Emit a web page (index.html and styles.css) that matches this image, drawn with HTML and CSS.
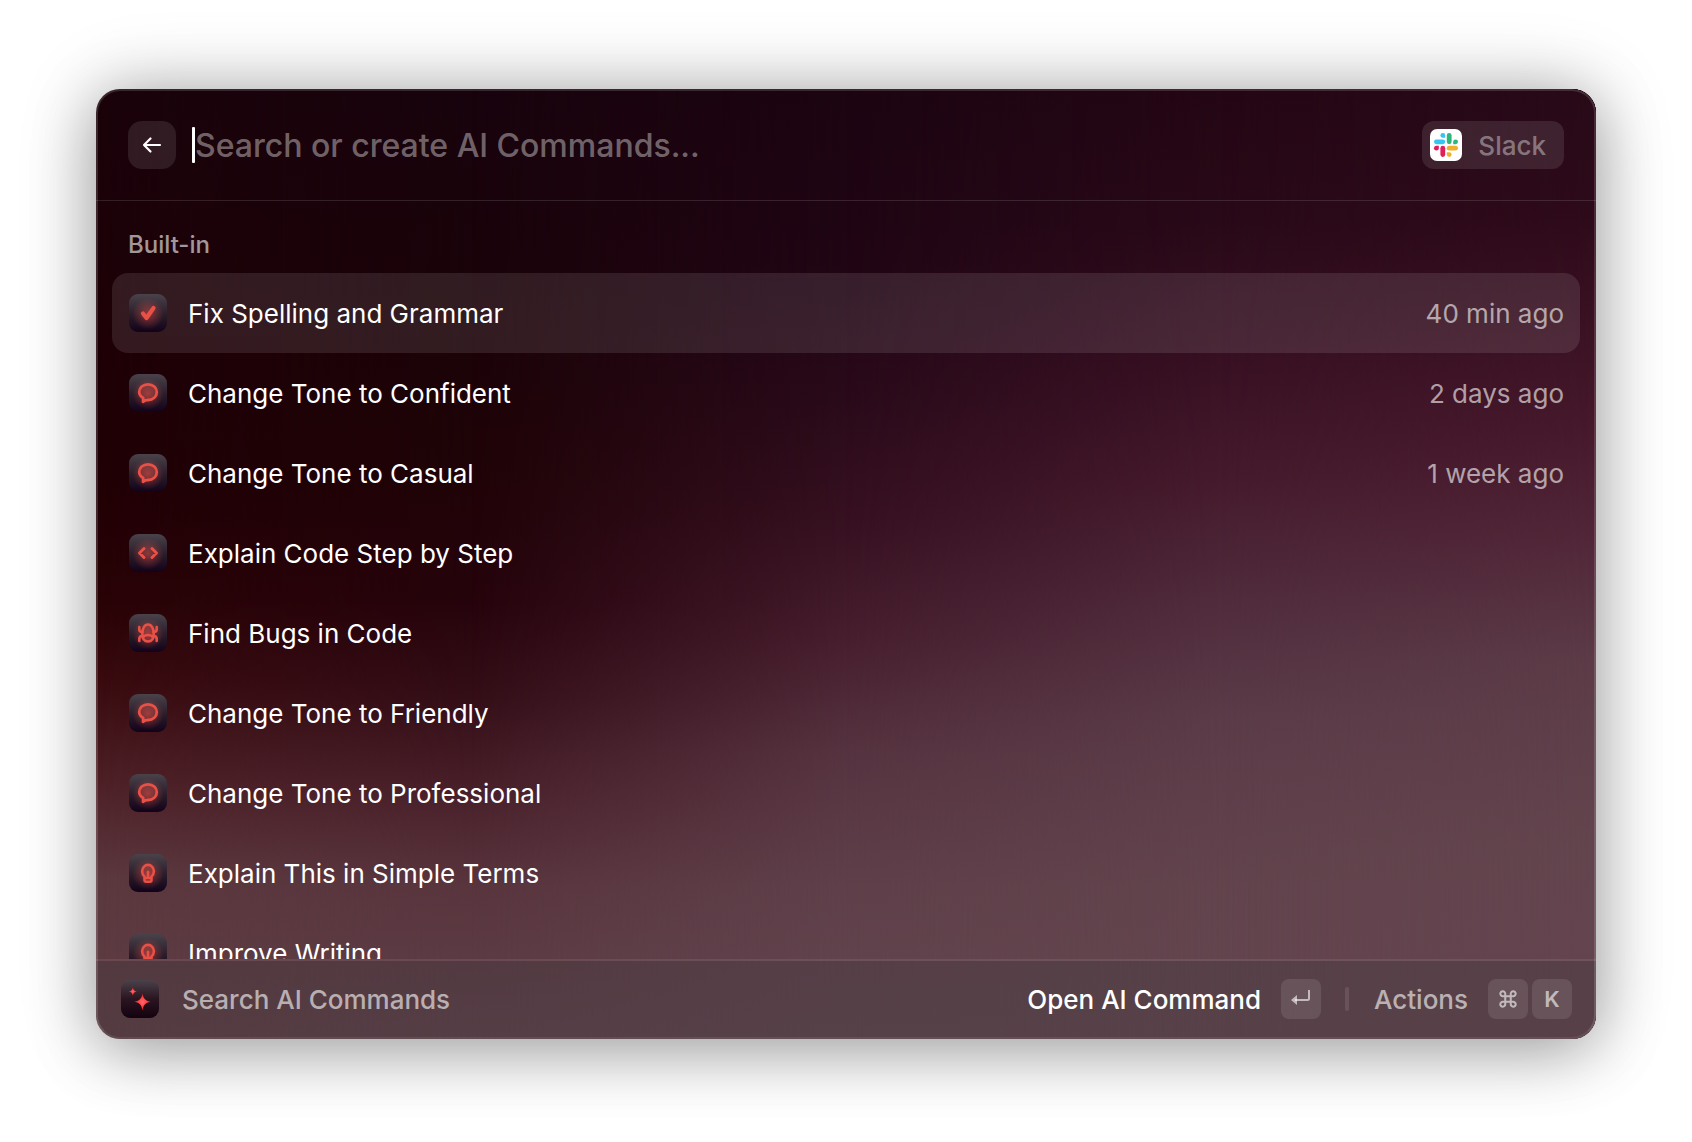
FILE: index.html
```html
<!DOCTYPE html>
<html lang="en">
<head>
<meta charset="utf-8">
<title>AI Commands</title>
<link rel="stylesheet" href="styles.css">
</head>
<body>
<svg class="sprite" aria-hidden="true">
  <defs>
    <symbol id="check" viewBox="0 0 38 38"><path d="M14 19.500l3.500 4.500 7-10" fill="none" stroke="currentColor" stroke-width="4.200" stroke-linecap="round" stroke-linejoin="round"/></symbol>
    <symbol id="bubble" viewBox="0 0 38 38"><path d="M19 10.300c5 0 8.800 3.200 8.800 7.800s-3.800 7.900-8.800 7.900c-.8 0-1.500 0-2.200.3l-2.800 1.500.2-3.800c-2.400-1.300-4-3.300-4-5.900 0-4.600 3.800-7.800 8.800-7.800z" fill="currentColor" fill-opacity=".2" stroke="currentColor" stroke-width="2.800" stroke-linejoin="round"/></symbol>
    <symbol id="code" viewBox="0 0 38 38"><path d="M15 14.500L10.500 19l4.500 4.500M23 14.500L27.500 19 23 23.500" fill="none" stroke="currentColor" stroke-width="3" stroke-linecap="round" stroke-linejoin="round"/></symbol>
    <symbol id="bug" viewBox="0 0 38 38"><g fill="none" stroke="currentColor" stroke-width="2.600" stroke-linecap="round" stroke-linejoin="round"><path d="M19 10.500c-3.500 0-5.700 4-5.700 9 0 5 2.200 8 5.700 8s5.700-3 5.700-8c0-5-2.200-9-5.700-9z" fill="currentColor" fill-opacity=".2"/><path d="M14.500 22.500c2.500-2 6.500-2 9 0M10.300 13v2.500c0 1.500 1 2.500 3 2.500M27.700 13v2.500c0 1.500-1 2.500-3 2.500M10.300 27v-2c0-1.700 1-3 3-3M27.700 27v-2c0-1.700-1-3-3-3"/></g></symbol>
    <symbol id="bulb" viewBox="0 0 38 38"><g fill="none" stroke="currentColor" stroke-width="2.600" stroke-linecap="round" stroke-linejoin="round"><path d="M15.500 22.500c-1.500-1.300-2.400-3-2.400-5.200a5.900 6.400 0 0 1 11.800 0c0 2.200-.9 3.900-2.400 5.200v3.600a1.600 1.600 0 0 1-1.600 1.600h-3.800a1.600 1.600 0 0 1-1.600-1.600z" fill="currentColor" fill-opacity=".2"/><path d="M19 18v5.500M16.500 24h5"/></g></symbol>
  </defs>
</svg>
<main class="window">
  <div class="backdrop" aria-hidden="true"><i class="b1"></i><i class="b2"></i><i class="b3"></i><i class="b4"></i><i class="b5"></i></div>
  <header class="search">
    <button class="back" type="button" aria-label="Back"><svg viewBox="0 0 24 24" width="24" height="24"><path d="M20 12H4M10.500 5.500L4 12l6.500 6.500" fill="none" stroke="#fff" stroke-width="2.200" stroke-linecap="round" stroke-linejoin="round"/></svg></button>
    <span class="caret" aria-hidden="true"></span>
    <input class="field" type="text" aria-label="Search or create AI Commands" placeholder="Search or create AI Commands...">
    <button class="app" type="button">
      <svg class="slack" viewBox="0 0 32 32" aria-hidden="true">
        <g fill="#36c5f0"><rect x="4" y="10.400" width="11.200" height="4.800" rx="2.400"/><path d="M15.200 8.800V6.400a2.400 2.400 0 1 0-2.400 2.400z"/></g>
        <g fill="#2eb67d"><rect x="16.800" y="4" width="4.800" height="11.200" rx="2.400"/><path d="M23.200 15.200h2.400a2.400 2.400 0 1 0-2.400-2.400z"/></g>
        <g fill="#ecb22e"><rect x="16.800" y="16.800" width="11.200" height="4.800" rx="2.400"/><path d="M16.800 23.200v2.400a2.400 2.400 0 1 0 2.400-2.400z"/></g>
        <g fill="#e01e5a"><rect x="10.400" y="16.800" width="4.800" height="11.200" rx="2.400"/><path d="M8.800 16.800H6.400a2.400 2.400 0 1 0 2.400 2.400z"/></g>
      </svg>
      <span>Slack</span>
    </button>
  </header>
  <section class="results">
    <h2 class="group">Built-in</h2>
    <ul class="list">
      <li class="row selected"><svg class="tile"><use href="#check"/></svg><span class="name">Fix Spelling and Grammar</span><time>40 min ago</time></li>
      <li class="row"><svg class="tile"><use href="#bubble"/></svg><span class="name">Change Tone to Confident</span><time>2 days ago</time></li>
      <li class="row"><svg class="tile"><use href="#bubble"/></svg><span class="name">Change Tone to Casual</span><time>1 week ago</time></li>
      <li class="row"><svg class="tile"><use href="#code"/></svg><span class="name">Explain Code Step by Step</span></li>
      <li class="row"><svg class="tile"><use href="#bug"/></svg><span class="name">Find Bugs in Code</span></li>
      <li class="row"><svg class="tile"><use href="#bubble"/></svg><span class="name">Change Tone to Friendly</span></li>
      <li class="row"><svg class="tile"><use href="#bubble"/></svg><span class="name">Change Tone to Professional</span></li>
      <li class="row"><svg class="tile"><use href="#bulb"/></svg><span class="name">Explain This in Simple Terms</span></li>
      <li class="row"><svg class="tile"><use href="#bulb"/></svg><span class="name">Improve Writing</span></li>
    </ul>
  </section>
  <footer class="bar">
    <svg class="tile stars" viewBox="0 0 38 38" aria-hidden="true">
      <defs><radialGradient id="glow"><stop offset="0" stop-color="#ff6a66"/><stop offset="1" stop-color="#fb1d22"/></radialGradient></defs>
      <g fill="url(#glow)"><path d="M21.500 13.500c.8 5 2.800 7.200 8 8.200-5.200 1-7.200 3.200-8 8.800-.8-5.600-2.800-7.800-8-8.800 5.200-1 7.200-3.200 8-8.200z"/><path d="M11.800 7.500c.5 2.400 1.500 3.500 4 4-2.500.5-3.500 1.600-4 4-.5-2.400-1.500-3.500-4-4 2.500-.5 3.500-1.600 4-4z"/></g></svg>
    <span class="title">Search AI Commands</span>
    <button class="action primary" type="button"><span class="label">Open AI Command</span>
      <kbd><svg viewBox="0 0 24 24" width="24" height="24"><path d="M20 3v8.500a1.500 1.500 0 0 1-1.500 1.500H6" fill="none" stroke="currentColor" stroke-width="2"/><path d="M8 8v10L2 13z" fill="currentColor"/></svg></kbd></button>
    <span class="sep"></span>
    <button class="action" type="button"><span class="label">Actions</span>
      <span class="keys"><kbd><svg viewBox="0 0 24 24" width="22" height="22"><path d="M9 9h6v6H9zM9 9H6.500A2.700 2.700 0 1 1 9 6.500zM15 9V6.500A2.700 2.700 0 1 1 17.500 9zM15 15h2.500a2.700 2.700 0 1 1-2.500 2.500zM9 15v2.500A2.700 2.700 0 1 1 6.500 15z" fill="none" stroke="currentColor" stroke-width="2.200"/></svg></kbd><kbd>K</kbd></span></button>
  </footer>
</main>
</body>
</html>
```

FILE: styles.css
```css
* { box-sizing: border-box; }

body {
  margin: 0;
  height: 100vh;
  padding: 89px 96px 103px;
  background: #fff;
  color: #fff;
  font: 400 26px/32px Inter, "Liberation Sans", sans-serif;
  overflow: hidden;
}

button, input { font: inherit; color: inherit; border: 0; padding: 0; background: none; }
.sprite { display: none; }

.window {
  position: relative;
  display: flex;
  flex-direction: column;
  height: 100%;
  border-radius: 24px;
  overflow: hidden;
  box-shadow: 0 0 80px rgba(0, 0, 0, .2), 0 12px 64px rgba(0, 0, 0, .28);
  isolation: isolate;
}

.window::after {
  content: "";
  position: absolute;
  inset: 0;
  border: 2px solid rgba(255, 255, 255, .14);
  border-bottom-color: rgba(255, 255, 255, .08);
  border-radius: inherit;
  pointer-events: none;
}

/* Colour columns, each fading in over the one to its left */
.backdrop { position: absolute; inset: 0; z-index: -1; display: grid; }
.backdrop i { grid-area: 1 / 1; }
.b1 { background: linear-gradient(#1a030a 0%, #1d0208 20%, #200005 40%, #290306 54%, #380a0e 62%, #4d2026 73%, #5b383e 83%, #5f3d44 100%); }
.b2 { background: linear-gradient(#18030d 0%, #1a0309 20%, #1f0307 40%, #26030c 54%, #340e17 64%, #49202a 74%, #59353e 84%, #60414a 100%); mask: linear-gradient(90deg, transparent, #000 25%); }
.b3 { background: linear-gradient(#1c0511 0%, #200514 18%, #2a0a1a 33%, #361020 45%, #471e2e 58%, #563340 70%, #5f404a 84%, #63464f 100%); mask: linear-gradient(90deg, transparent 25%, #000 50%); }
.b4 { background: linear-gradient(#240614 0%, #290918 14%, #371022 28%, #451a2c 41%, #502c3c 54%, #5b3b48 66%, #62444d 84%, #64464f 100%); mask: linear-gradient(90deg, transparent 50%, #000 75%); }
.b5 { background: linear-gradient(#280a18 0%, #2e0a1a 13%, #3a1223 25%, #47192c 36%, #522839 48%, #5c3b47 60%, #63454e 80%, #64444e 100%); mask: linear-gradient(90deg, transparent 75%, #000 100%); }

.search {
  display: flex;
  align-items: center;
  flex: none;
  height: 112px;
  padding: 0 32px;
  border-bottom: 1px solid rgba(255, 255, 255, .12);
}

.back {
  display: grid;
  place-items: center;
  width: 48px;
  height: 48px;
  margin-right: 16px;
  border-radius: 14px;
  background: rgba(255, 255, 255, .1);
}

.caret { width: 3px; height: 36px; border-radius: 1px; background: #fff; }

.field { flex: 1; min-width: 0; height: 50px; padding-top: 2px; font-size: 32px; font-weight: 500; outline: 0; }
.field::placeholder { color: rgba(255, 255, 255, .4); opacity: 1; }

.app {
  display: flex;
  align-items: center;
  gap: 16px;
  height: 48px;
  padding: 0 18px 0 8px;
  border-radius: 12px;
  background: rgba(255, 255, 255, .1);
  color: rgba(255, 255, 255, .4);
  font-weight: 500;
}

.slack { width: 32px; height: 32px; border-radius: 7px; background: #fff; }

.results { flex: 1; min-height: 0; overflow: hidden; padding: 28px 16px 0; }
.group { margin: 0 16px 12px; font-size: 24px; font-weight: 500; color: rgba(255, 255, 255, .6); }
.list { margin: 0; padding: 0; list-style: none; }

.row { display: flex; align-items: center; height: 80px; padding: 0 16px 0 17px; border-radius: 16px; }
.row.selected { background: rgba(255, 255, 255, .1); }
.name { flex: 1; margin-left: 21px; }
.row time { color: rgba(255, 255, 255, .6); }
.app span, .name, .row time, .title, .label { padding-top: 2px; }

.tile {
  width: 38px;
  height: 38px;
  border-radius: 9px;
  color: #e95046;
  background:
    radial-gradient(circle at 50% 52%, rgba(236, 81, 72, .5), rgba(236, 81, 72, 0) 58%),
    linear-gradient(#4a424a, #2a1c29 55%, #12021a);
}

.bar {
  display: flex;
  align-items: center;
  flex: none;
  height: 80px;
  padding: 0 24px 2px 25px;
  border-top: 2px solid rgba(255, 255, 255, .08);
  background: rgba(68, 58, 62, .38);
  background-clip: padding-box;
  font-weight: 500;
}

.stars { background: linear-gradient(#4a424a, #2a1420 50%, #14020f); }
.title { flex: 1; margin-left: 23px; color: rgba(255, 255, 255, .6); }
.action { display: flex; align-items: center; gap: 20px; color: rgba(255, 255, 255, .6); font-weight: 500; }
.primary { color: #fff; }
.keys { display: flex; gap: 4px; }
.sep { width: 4px; height: 24px; margin: 0 25px 0 24px; border-radius: 2px; background: rgba(255, 255, 255, .1); }

kbd {
  display: grid;
  place-items: center;
  width: 40px;
  height: 40px;
  border-radius: 8px;
  background: rgba(255, 255, 255, .1);
  color: rgba(255, 255, 255, .6);
  font: 600 22px/24px Inter, "Liberation Sans", sans-serif;
}
```
